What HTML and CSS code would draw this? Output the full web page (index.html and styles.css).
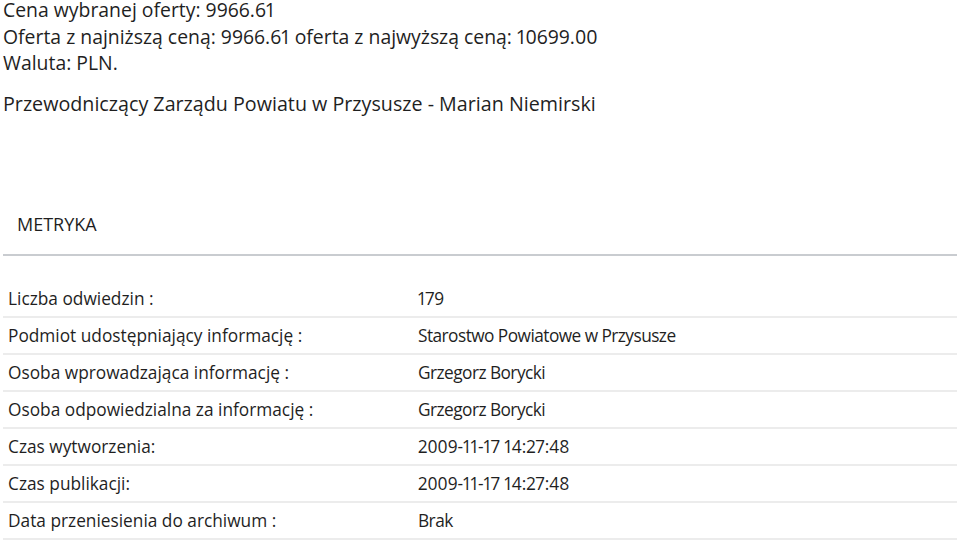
FILE: index.html
```html
<!DOCTYPE html>
<html lang="pl">
<head>
<meta charset="utf-8">
<title>Metryka</title>
<link rel="stylesheet" href="styles.css">
</head>
<body>
<div class="offer">
  <p class="line">Cena wybranej oferty: 9966.61</p>
  <p class="line">Oferta z najniższą ceną: 9966.61 oferta z najwyższą ceną: 10699.00</p>
  <p class="line">Waluta: PLN.</p>
</div>
<p class="signature">Przewodniczący Zarządu Powiatu w Przysusze - Marian Niemirski</p>
<section class="metryka">
  <h2 class="metryka-title">METRYKA</h2>
  <table class="metryka-table">
    <tr><td class="label">Liczba odwiedzin :</td><td class="value num">179</td></tr>
    <tr><td class="label">Podmiot udostępniający informację :</td><td class="value">Starostwo Powiatowe w Przysusze</td></tr>
    <tr><td class="label">Osoba wprowadzająca informację :</td><td class="value">Grzegorz Borycki</td></tr>
    <tr><td class="label">Osoba odpowiedzialna za informację :</td><td class="value">Grzegorz Borycki</td></tr>
    <tr><td class="label">Czas wytworzenia:</td><td class="value num">2009-11-17 14:27:48</td></tr>
    <tr><td class="label">Czas publikacji:</td><td class="value num">2009-11-17 14:27:48</td></tr>
    <tr><td class="label">Data przeniesienia do archiwum :</td><td class="value">Brak</td></tr>
  </table>
</section>
</body>
</html>
```
FILE: styles.css
```css
html, body {
  margin: 0;
  padding: 0;
  background: #fff;
}
body {
  font-family: "Open Sans", "Liberation Sans", sans-serif;
  color: #1f1f1f;
  font-variant-numeric: proportional-nums;
}
.offer {
  margin-top: -3px;
  padding-left: 3px;
}
.line {
  margin: 0;
  font-size: 19.4px;
  line-height: 26.5px;
  white-space: nowrap;
}
.signature {
  margin: 14px 0 0;
  padding-left: 3px;
  font-size: 19.7px;
  line-height: 26.5px;
  white-space: nowrap;
}
.metryka {
  margin: 94px 3px 0;
}
.metryka-title {
  margin: 0;
  padding: 0 0 17px 14px;
  font-size: 18px;
  font-weight: 400;
  line-height: 26px;
  border-bottom: 2px solid #c9ccd0;
}
.metryka-table {
  width: 100%;
  margin-top: 25px;
  border-collapse: collapse;
}
.metryka-table td {
  padding: 5.5px 5px;
  font-size: 17.3px;
  line-height: 24px;
  border-bottom: 2px solid #ececec;
  text-align: left;
  vertical-align: middle;
  white-space: nowrap;
}
.metryka-table .label {
  width: 400px;
}
.metryka-table .value {
  letter-spacing: -0.55px;
}
.metryka-table .value.num {
  letter-spacing: 0;
}
```
